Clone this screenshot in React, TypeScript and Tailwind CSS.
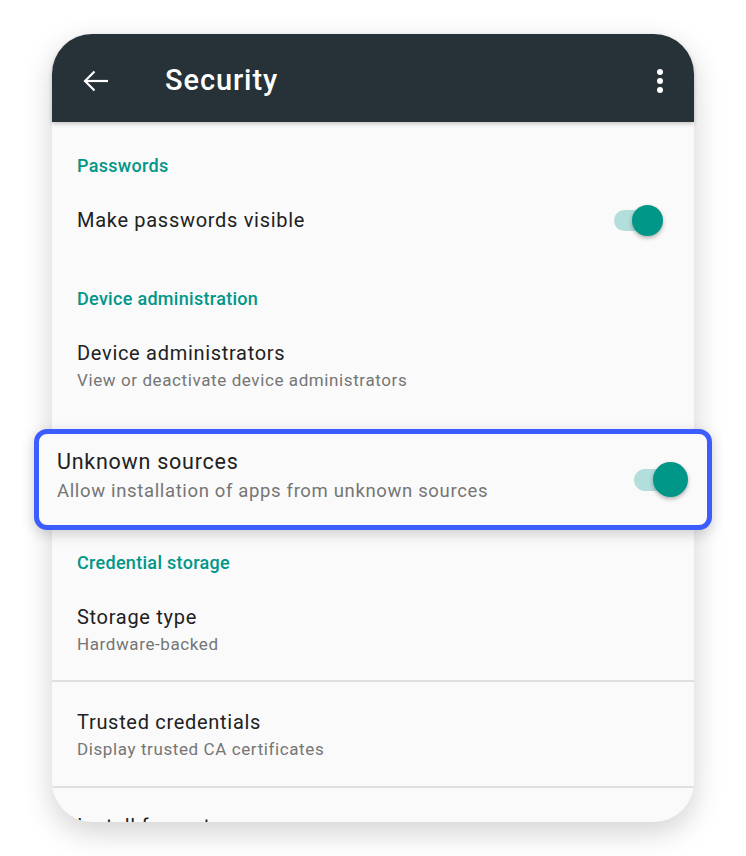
const Toggle = ({ big = false }: { big?: boolean }) => (
  <div className={`relative flex items-center ${big ? "w-[54px] h-[36px]" : "w-[49px] h-[32px]"}`}>
    <div
      className={`rounded-full bg-[#b2dfdb] ${big ? "w-[44px] h-[22px]" : "w-[40px] h-[21px]"}`}
    />
    <div
      className={`absolute right-0 rounded-full bg-[#009688] shadow-[0_2px_4px_rgba(0,0,0,0.3)] ${
        big ? "w-[35px] h-[35px]" : "w-[31px] h-[31px]"
      }`}
    />
  </div>
);

const SectionLabel = ({ text, className }: { text: string; className: string }) => (
  <div
    className={`px-[25px] text-[18px] leading-[20px] font-medium tracking-[0.3px] text-[#009688] ${className}`}
  >
    {text}
  </div>
);

const TwoLine = ({ title, sub }: { title: string; sub: string }) => (
  <div>
    <div className="text-[20px] leading-[28px] tracking-[0.7px] text-[#212121]">{title}</div>
    <div className="text-[17px] leading-[26px] tracking-[0.6px] text-[#757575]">{sub}</div>
  </div>
);

export default function App() {
  return (
    <div
      className="min-h-[856px] bg-white pt-[34px] flex justify-center"
      style={{ fontFamily: "Roboto, 'Noto Sans', sans-serif" }}
    >
      <div className="w-[642px] h-[788px] flex flex-col rounded-[40px] bg-[#fafafa] shadow-[0_10px_30px_rgba(0,0,0,0.18)]">
        {/* toolbar */}
        <div className="relative z-10 h-[88px] shrink-0 rounded-t-[40px] bg-[#263238] flex items-center pt-[5px] pl-[31px] pr-[31px] shadow-[0_2px_4px_rgba(0,0,0,0.2)]">
          <svg width="26" height="22" viewBox="0 0 26 22" fill="none" stroke="white" strokeWidth="2.2">
            <path d="M25 11H2.5" />
            <path d="M11.5 1.5L2 11l9.5 9.5" />
          </svg>
          <div className="ml-[56px] text-[29px] font-medium text-white tracking-[0.9px]">Security</div>
          <div className="ml-auto flex flex-col gap-[3px] items-center">
            <span className="w-[6px] h-[6px] rounded-full bg-white" />
            <span className="w-[6px] h-[6px] rounded-full bg-white" />
            <span className="w-[6px] h-[6px] rounded-full bg-white" />
          </div>
        </div>

        <SectionLabel text="Passwords" className="h-[68px] shrink-0 pt-[34px]" />
        <div className="h-[60px] shrink-0 flex items-center justify-between pl-[25px] pr-[31px]">
          <div className="text-[20px] tracking-[0.7px] text-[#212121]">Make passwords visible</div>
          <Toggle />
        </div>

        <SectionLabel text="Device administration" className="h-[70px] shrink-0 pt-[39px]" />
        <div className="h-[92px] shrink-0 flex items-center px-[25px]">
          <TwoLine title="Device administrators" sub="View or deactivate device administrators" />
        </div>

        {/* highlighted row */}
        <div className="relative z-10 mt-[17px] -mx-[18px] h-[101px] shrink-0 rounded-[13px] border-[5px] border-[#3d5cff] bg-[#fafafa] shadow-[0_4px_14px_rgba(0,0,0,0.18)] flex items-center justify-between pl-[18px] pr-[19px]">
          <div className="-mt-[8px]">
            <div className="text-[21.5px] leading-[30px] tracking-[0.75px] text-[#212121]">Unknown sources</div>
            <div className="text-[18.5px] leading-[28px] tracking-[0.65px] text-[#757575]">
              Allow installation of apps from unknown sources
            </div>
          </div>
          <Toggle big />
        </div>

        <SectionLabel text="Credential storage" className="h-[60px] shrink-0 pt-[23px]" />
        <div className="h-[92px] shrink-0 pt-[13px] px-[25px] border-b-2 border-[#e0e0e0]">
          <TwoLine title="Storage type" sub="Hardware-backed" />
        </div>

        <div className="flex-1 min-h-0 overflow-hidden rounded-b-[40px]">
          <div className="h-[106px] pt-[26px] px-[25px] border-b-2 border-[#e0e0e0]">
            <TwoLine title="Trusted credentials" sub="Display trusted CA certificates" />
          </div>
          <div className="pt-[24px] px-[25px]">
            <TwoLine title="Install from storage" sub="Install certificates from storage" />
          </div>
        </div>
      </div>
    </div>
  );
}
